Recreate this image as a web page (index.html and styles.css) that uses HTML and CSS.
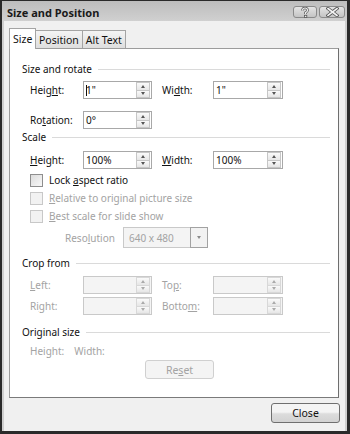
FILE: index.html
```html
<!DOCTYPE html>
<html lang="en">
<head>
    <meta charset="UTF-8">
    <meta name="viewport" content="width=device-width, initial-scale=1.0">
    <title>Size and Position</title>
    <link rel="stylesheet" href="styles.css">
</head>
<body>

<div class="window">
    <div class="titlebar">
        <span class="title">Size and Position</span>
        <div class="caption-buttons">
            <span class="cap-btn">
                <svg width="10" height="11" viewBox="0 0 10 11">
                    <path d="M2.5 3.5 Q2.5 1 5 1 Q7.5 1 7.5 3.3 Q7.5 4.8 5.6 5.6 L5.6 7" fill="none" stroke="#555" stroke-width="2.6"/>
                    <path d="M2.5 3.5 Q2.5 1 5 1 Q7.5 1 7.5 3.3 Q7.5 4.8 5.6 5.6 L5.6 7" fill="none" stroke="#eee" stroke-width="1.2"/>
                    <rect x="4.4" y="8.3" width="2.4" height="2.2" fill="#eee" stroke="#555" stroke-width="0.8"/>
                </svg>
            </span>
            <span class="cap-btn wide">
                <svg width="13" height="10" viewBox="0 0 13 10">
                    <path d="M2 1.5 L11 8.5 M11 1.5 L2 8.5" stroke="#555" stroke-width="3.4" stroke-linecap="square"/>
                    <path d="M2 1.5 L11 8.5 M11 1.5 L2 8.5" stroke="#f4f4f4" stroke-width="1.6" stroke-linecap="square"/>
                </svg>
            </span>
        </div>
    </div>

    <div class="client">
        <div class="tabs">
            <span class="tab active">Size</span>
            <span class="tab">Position</span>
            <span class="tab">Alt Text</span>
        </div>

        <div class="panel">
            <div class="group-title g-size"><span>Size and rotate</span></div>
            <div class="row r-height">
                <span class="lbl">Heig<u>h</u>t:</span>
                <div class="spin"><span class="val caret">1"</span><span class="spin-btns"><i class="up"></i><i class="down"></i></span></div>
                <span class="lbl2">Wi<u>d</u>th:</span>
                <div class="spin wide"><span class="val">1"</span><span class="spin-btns"><i class="up"></i><i class="down"></i></span></div>
            </div>
            <div class="row r-rotation">
                <span class="lbl">Ro<u>t</u>ation:</span>
                <div class="spin"><span class="val">0°</span><span class="spin-btns"><i class="up"></i><i class="down"></i></span></div>
            </div>

            <div class="group-title g-scale"><span>Scale</span></div>
            <div class="row r-scale">
                <span class="lbl"><u>H</u>eight:</span>
                <div class="spin"><span class="val">100%</span><span class="spin-btns"><i class="up"></i><i class="down"></i></span></div>
                <span class="lbl2"><u>W</u>idth:</span>
                <div class="spin wide"><span class="val">100%</span><span class="spin-btns"><i class="up"></i><i class="down"></i></span></div>
            </div>
            <div class="check c-lock"><span class="box"></span><span>Lock <u>a</u>spect ratio</span></div>
            <div class="check c-rel disabled"><span class="box"></span><span><u>R</u>elative to original picture size</span></div>
            <div class="check c-best disabled"><span class="box"></span><span><u>B</u>est scale for slide show</span></div>
            <div class="row r-res disabled">
                <span class="lbl-res">Reso<u>l</u>ution</span>
                <div class="combo"><span class="val">640 x 480</span><span class="combo-btn"><i class="down"></i></span></div>
            </div>

            <div class="group-title g-crop"><span>Crop from</span></div>
            <div class="row r-left disabled">
                <span class="lbl"><u>L</u>eft:</span>
                <div class="spin"><span class="val"></span><span class="spin-btns"><i class="up"></i><i class="down"></i></span></div>
                <span class="lbl2">To<u>p</u>:</span>
                <div class="spin wide"><span class="val"></span><span class="spin-btns"><i class="up"></i><i class="down"></i></span></div>
            </div>
            <div class="row r-right disabled">
                <span class="lbl">Ri<u>g</u>ht:</span>
                <div class="spin"><span class="val"></span><span class="spin-btns"><i class="up"></i><i class="down"></i></span></div>
                <span class="lbl2">Botto<u>m</u>:</span>
                <div class="spin wide"><span class="val"></span><span class="spin-btns"><i class="up"></i><i class="down"></i></span></div>
            </div>

            <div class="group-title g-orig"><span>Original size</span></div>
            <div class="orig disabled"><span>Height:</span><span>Width:</span></div>
            <div class="reset-row"><button class="btn reset" disabled>Re<u>s</u>et</button></div>
        </div>

        <div class="footer">
            <button class="btn close">Close</button>
        </div>
    </div>
</div>

</body>
</html>
```

FILE: styles.css
```css
body {
    margin: 0;
    padding: 0;
    font-family: "Noto Sans", "Open Sans", sans-serif;
    font-size: 10px;
    color: #111;
}
.window {
    width: 350px;
    height: 434px;
    box-sizing: border-box;
    border: 1px solid #2a2a2a;
    border-left-width: 2px;
    border-bottom-width: 3px;
    border-right-width: 3px;
    background: #cfcfcf;
    display: flex;
    flex-direction: column;
}
.titlebar {
    height: 20px;
    display: flex;
    align-items: center;
    justify-content: space-between;
    padding: 0 2px 0 5px;
    background: linear-gradient(#bdbdbd, #d0d0d0);
}
.title {
    font-weight: bold;
    font-size: 11px;
    color: #1a1a1a;
    padding-top: 2px;
}
.caption-buttons {
    display: flex;
    gap: 2px;
    align-items: center;
    margin-top: 2px;
}
.cap-btn {
    width: 24px;
    height: 12px;
    box-sizing: border-box;
    border: 1px solid #8a8a8a;
    border-radius: 3px;
    background: linear-gradient(#e4e4e4, #c4c4c4);
    display: flex;
    align-items: center;
    justify-content: center;
}
.cap-btn.wide {
    width: 26px;
}
.client {
    flex: 1;
    background: #f0f0f0;
    margin: 0 2px 0 2px;
    padding: 7px 6px 0 5px;
    display: flex;
    flex-direction: column;
}
.tabs {
    display: flex;
    align-items: flex-end;
    height: 20px;
    position: relative;
    z-index: 1;
}
.tab {
    height: 18px;
    box-sizing: border-box;
    padding: 2px 3px 0 3px;
    border: 1px solid #a4a4a4;
    border-bottom: none;
    border-left: none;
    background: linear-gradient(#f4f4f4, #dedede);
    font-size: 10.5px;
    line-height: 15px;
}
.tab.active {
    height: 21px;
    margin-bottom: -1px;
    border-left: 1px solid #a4a4a4;
    background: #fff;
    padding-top: 3px;
    width: 27px;
    padding-left: 3px;
}
.panel {
    height: 350px;
    box-sizing: border-box;
    border: 1px solid #9c9c9c;
    border-right-color: #6e6e6e;
    border-bottom-color: #7a7a7a;
    background: #fff;
    padding: 0 8px 0 12px;
}
.group-title {
    display: flex;
    align-items: center;
    height: 14px;
    line-height: 14px;
    color: #111;
}
.group-title::after {
    content: "";
    flex: 1;
    height: 1px;
    background: #dadada;
    margin-left: 6px;
}
.g-size { margin-top: 13px; }
.g-scale { margin-top: 1px; }
.g-crop { margin-top: 8px; }
.g-orig { margin-top: 10px; }

.row {
    display: flex;
    align-items: center;
    margin-left: 8px;
    height: 18px;
}
.r-height { margin-top: 5px; }
.r-rotation { margin-top: 12px; }
.r-scale { margin-top: 7px; }
.r-left { margin-top: 6px; }
.r-right { margin-top: 3px; }

.lbl {
    width: 53px;
}
.lbl2 {
    width: 51px;
    margin-left: 10px;
}
.spin {
    width: 69px;
    height: 18px;
    box-sizing: border-box;
    border: 1px solid #a8a8a8;
    background: #fff;
    display: flex;
    align-items: center;
    justify-content: space-between;
}
.spin.wide {
    width: 70px;
}
.spin .val {
    padding-left: 2px;
    line-height: 14px;
}
.caret::before {
    content: "";
    display: inline-block;
    width: 1px;
    height: 11px;
    background: #111;
    vertical-align: -2px;
    margin-right: -1px;
}
.spin-btns {
    width: 14px;
    height: 16px;
    display: flex;
    flex-direction: column;
    margin-right: 1px;
}
.spin-btns i {
    flex: 1;
    box-sizing: border-box;
    border: 1px solid #c6c6c6;
    background: linear-gradient(#fafafa, #e6e6e6);
}
.spin-btns i + i {
    border-top: none;
}
.up,
.down {
    display: flex;
    align-items: center;
    justify-content: center;
}
.up::after,
.down::after {
    content: "";
    border-left: 2.5px solid transparent;
    border-right: 2.5px solid transparent;
}
.up::after {
    border-bottom: 3px solid #555;
}
.down::after {
    border-top: 3px solid #555;
}
.disabled {
    color: #a3a3a3;
}
.disabled .spin,
.disabled .combo {
    background: #f4f4f4;
    border-color: #c9c9c9;
}
.disabled .spin-btns i {
    border-color: #d8d8d8;
}
.disabled .up::after {
    border-bottom-color: #aaa;
}
.disabled .down::after {
    border-top-color: #aaa;
}

.check {
    display: flex;
    align-items: center;
    height: 16px;
    margin-left: 8px;
}
.check .box {
    width: 13px;
    height: 13px;
    box-sizing: border-box;
    border: 1px solid #8e8e8e;
    background: linear-gradient(135deg, #dcdcdc, #f8f8f8);
    margin-right: 6px;
}
.check.disabled .box {
    border-color: #c8c8c8;
    background: #f2f2f2;
}
.c-lock { margin-top: 3px; }
.c-rel { margin-top: 2px; }
.c-best { margin-top: 2px; }

.r-res {
    margin-top: 3px;
    margin-left: 43px;
    height: 21px;
}
.lbl-res {
    width: 58px;
}
.combo {
    width: 85px;
    height: 21px;
    box-sizing: border-box;
    border: 1px solid #c9c9c9;
    display: flex;
    align-items: center;
    justify-content: space-between;
}
.combo .val {
    padding-left: 5px;
}
.combo-btn {
    width: 18px;
    height: 21px;
    margin: -1px -1px -1px 0;
    box-sizing: border-box;
    border: 1px solid #a2a2a2;
    background: #f2f2f2;
    display: flex;
    align-items: center;
    justify-content: center;
}
.combo-btn .down::after {
    border-top-color: #8a8a8a;
}

.orig {
    display: flex;
    gap: 10px;
    margin: 5px 0 0 8px;
    height: 14px;
    line-height: 14px;
}
.reset-row {
    margin-top: 2px;
    padding-left: 123px;
}
.btn {
    font-family: inherit;
    font-size: 10.5px;
    box-sizing: border-box;
    border-radius: 3px;
    padding: 0;
}
.reset {
    width: 69px;
    height: 19px;
    border: 1px solid #d0d0d0;
    background: #f4f4f4;
    color: #a3a3a3;
}
.footer {
    display: flex;
    justify-content: flex-end;
    margin-top: 5px;
    padding-right: 0;
}
.close {
    width: 69px;
    height: 20px;
    margin-right: -1px;
    border: 1px solid #6f6f6f;
    background: linear-gradient(#f4f4f4 45%, #dcdcdc 55%, #d2d2d2);
    color: #111;
}
```
